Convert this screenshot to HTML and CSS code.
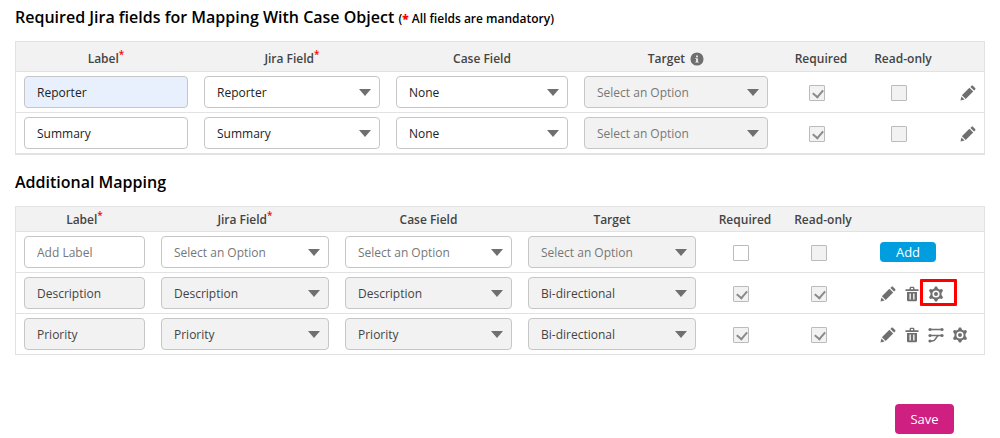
FILE: index.html
```html
<!DOCTYPE html>
<html lang="en">

<head>
  <meta charset="UTF-8">
  <meta name="viewport" content="width=device-width, initial-scale=1.0">
  <title>Jira Field Mapping</title>
  <link rel="stylesheet" href="styles.css">
</head>

<body>
  <!-- icons -->
  <svg class="sprite" aria-hidden="true">
    <symbol id="i-edit" viewBox="0 0 16 16">
      <path d="M.5 15.500l.9-4.100 3.200 3.200z" />
      <path d="M1.900 10.300l7.500-7.500 3.800 3.800-7.500 7.500z" />
      <path d="M10.400 1.900l1-1c.5-.5 1.200-.5 1.700 0l2 2c.5.5.5 1.200 0 1.700l-1 1z" />
    </symbol>
    <symbol id="i-trash" viewBox="0 0 16 16">
      <path d="M1.500 3.200h4.100V2q0-1.200 1.200-1.200h2.400q1.200 0 1.200 1.200v1.200h4.100v1.800h-13zM7 3.200h2V2.100H7z" fill-rule="evenodd" />
      <path d="M3 6h10v8q0 1.300-1.300 1.300H4.300Q3 15.300 3 14zM5.500 7.500v6h1.300v-6zm3.700 0v6h1.300v-6z" fill-rule="evenodd" />
    </symbol>
    <symbol id="i-gear" viewBox="0 0 16 16">
      <path d="M7 .5h2l.9 2 1.500.9 2.600-.4 1 1.800-1.500 2.100v2.200l1.500 2.100-1 1.800-2.600-.4-1.500.9-.9 2H7l-.9-2-1.500-.9-2.600.4-1-1.800 1.500-2.100V6.900L1 4.800 2 3l2.600.4 1.500-.9zM8 4.400a3.600 3.600 0 100 7.200 3.600 3.600 0 000-7.200zM8 6a2 2 0 110 4 2 2 0 010-4z" fill-rule="evenodd" />
    </symbol>
    <symbol id="i-map" viewBox="0 0 16 16">
      <path d="M2 2.500h12M2 8.500h12M2 14h2.500C8 14 8 8.500 11 8.500" fill="none" stroke="currentColor" stroke-width="1.600" />
      <circle cx="2" cy="2.500" r="1.600" />
      <circle cx="14" cy="2.500" r="1.600" />
      <circle cx="2" cy="8.500" r="1.600" />
      <circle cx="14" cy="8.500" r="1.600" />
      <circle cx="2" cy="14" r="1.600" />
    </symbol>
    <symbol id="i-info" viewBox="0 0 16 16">
      <path d="M8 .5a7.500 7.500 0 100 15 7.500 7.500 0 000-15zM7 4h2v2H7zM6 7h3v4h1v1H6v-1h1V8H6z" fill-rule="evenodd" />
    </symbol>
  </svg>

  <main>
    <h2>Required Jira fields for Mapping With Case Object <small>(<b class="star">*</b> All fields are mandatory)</small></h2>
    <table class="mapping required">
      <colgroup>
        <col class="c-label">
        <col class="c-jira">
        <col class="c-case">
        <col class="c-target">
        <col class="c-req">
        <col class="c-read">
        <col class="c-action">
      </colgroup>
      <thead>
        <tr>
          <th>Label<sup>*</sup></th>
          <th>Jira Field<sup>*</sup></th>
          <th>Case Field</th>
          <th>Target <svg class="info"><use href="#i-info" /></svg></th>
          <th class="check">Required</th>
          <th class="check">Read-only</th>
          <th></th>
        </tr>
      </thead>
      <tbody>
        <tr>
          <td><input type="text" class="field filled" value="Reporter" aria-label="Label"></td>
          <td><div class="select"><select class="field" aria-label="Jira Field"><option>Reporter</option></select></div></td>
          <td><div class="select"><select class="field" aria-label="Case Field"><option>None</option></select></div></td>
          <td><div class="select"><select class="field empty" aria-label="Target" disabled><option>Select an Option</option></select></div></td>
          <td><input type="checkbox" aria-label="Required" checked disabled></td>
          <td><input type="checkbox" aria-label="Read-only" disabled></td>
          <td>
            <div class="actions">
              <button type="button" class="icon" aria-label="Edit"><svg><use href="#i-edit" /></svg></button>
            </div>
          </td>
        </tr>
        <tr>
          <td><input type="text" class="field" value="Summary" aria-label="Label"></td>
          <td><div class="select"><select class="field" aria-label="Jira Field"><option>Summary</option></select></div></td>
          <td><div class="select"><select class="field" aria-label="Case Field"><option>None</option></select></div></td>
          <td><div class="select"><select class="field empty" aria-label="Target" disabled><option>Select an Option</option></select></div></td>
          <td><input type="checkbox" aria-label="Required" checked disabled></td>
          <td><input type="checkbox" aria-label="Read-only" disabled></td>
          <td>
            <div class="actions">
              <button type="button" class="icon" aria-label="Edit"><svg><use href="#i-edit" /></svg></button>
            </div>
          </td>
        </tr>
      </tbody>
    </table>

    <h2>Additional Mapping</h2>
    <table class="mapping additional">
      <colgroup>
        <col class="c-label">
        <col class="c-jira">
        <col class="c-case">
        <col class="c-target">
        <col class="c-req">
        <col class="c-read">
        <col class="c-action">
      </colgroup>
      <thead>
        <tr>
          <th>Label<sup>*</sup></th>
          <th>Jira Field<sup>*</sup></th>
          <th>Case Field</th>
          <th>Target</th>
          <th class="check">Required</th>
          <th class="check">Read-only</th>
          <th></th>
        </tr>
      </thead>
      <tbody>
        <tr>
          <td><input type="text" class="field" placeholder="Add Label" aria-label="Label"></td>
          <td><div class="select"><select class="field empty" aria-label="Jira Field"><option>Select an Option</option></select></div></td>
          <td><div class="select"><select class="field empty" aria-label="Case Field"><option>Select an Option</option></select></div></td>
          <td><div class="select"><select class="field empty" aria-label="Target" disabled><option>Select an Option</option></select></div></td>
          <td><input type="checkbox" aria-label="Required"></td>
          <td><input type="checkbox" aria-label="Read-only" disabled></td>
          <td>
            <div class="actions">
              <button type="button" class="btn add">Add</button>
            </div>
          </td>
        </tr>
        <tr>
          <td><input type="text" class="field" value="Description" aria-label="Label" disabled></td>
          <td><div class="select"><select class="field" aria-label="Jira Field" disabled><option>Description</option></select></div></td>
          <td><div class="select"><select class="field" aria-label="Case Field" disabled><option>Description</option></select></div></td>
          <td><div class="select"><select class="field" aria-label="Target" disabled><option>Bi-directional</option></select></div></td>
          <td><input type="checkbox" aria-label="Required" checked disabled></td>
          <td><input type="checkbox" aria-label="Read-only" checked disabled></td>
          <td>
            <div class="actions">
              <button type="button" class="icon" aria-label="Edit"><svg><use href="#i-edit" /></svg></button>
              <button type="button" class="icon" aria-label="Delete"><svg><use href="#i-trash" /></svg></button>
              <button type="button" class="icon marked" aria-label="Settings"><svg><use href="#i-gear" /></svg></button>
            </div>
          </td>
        </tr>
        <tr>
          <td><input type="text" class="field" value="Priority" aria-label="Label" disabled></td>
          <td><div class="select"><select class="field" aria-label="Jira Field" disabled><option>Priority</option></select></div></td>
          <td><div class="select"><select class="field" aria-label="Case Field" disabled><option>Priority</option></select></div></td>
          <td><div class="select"><select class="field" aria-label="Target" disabled><option>Bi-directional</option></select></div></td>
          <td><input type="checkbox" aria-label="Required" checked disabled></td>
          <td><input type="checkbox" aria-label="Read-only" checked disabled></td>
          <td>
            <div class="actions">
              <button type="button" class="icon" aria-label="Edit"><svg><use href="#i-edit" /></svg></button>
              <button type="button" class="icon" aria-label="Delete"><svg><use href="#i-trash" /></svg></button>
              <button type="button" class="icon" aria-label="Map values"><svg><use href="#i-map" /></svg></button>
              <button type="button" class="icon" aria-label="Settings"><svg><use href="#i-gear" /></svg></button>
            </div>
          </td>
        </tr>
      </tbody>
    </table>

    <div class="footer">
      <button type="submit" class="btn save">Save</button>
    </div>
  </main>
</body>

</html>
```

FILE: styles.css
```css
:root {
  --color-line: #e2e2e2;
  --color-field-border: #c6c6c6;
  --color-disabled: #f2f2f2;
  --color-icon: #6f6f6f;
  --color-add: #009ddf;
  --color-save: #cf2082;
}

* {
  box-sizing: border-box;
}

body {
  margin: 0;
  padding: 6px 15px 4px;
  font-family: "Open Sans", "Noto Sans", sans-serif;
  font-size: 12px;
  line-height: 18px;
  color: #444;
  background: #fff;
}

.sprite {
  display: none;
}

h2 {
  margin: 0 0 13px;
  font-size: 16px;
  line-height: 22px;
  font-weight: 600;
  color: #000;
}

h2 small {
  font-size: 12px;
  line-height: 1;
}

.star,
sup {
  color: #f00;
}

sup {
  font-size: 10px;
  line-height: 0;
  vertical-align: 5px;
}

.mapping {
  width: 100%;
  table-layout: fixed;
  border-collapse: separate;
  border-spacing: 0;
  border: 1px solid var(--color-line);
}

.mapping th {
  height: 25px;
  padding: 2px 8px 0;
  font-weight: 600;
  background: var(--color-disabled);
  border-bottom: 1px solid var(--color-line);

  &.check {
    padding-right: 0;
  }
}

.mapping td {
  height: 41px;
  padding: 4px 8px;
  border-bottom: 1px solid var(--color-line);
}

/* column widths, the table stretches them in proportion */
.required {
  margin-bottom: 16px;

  & th { height: 30px; padding-top: 5px; }
  & .c-label { width: 180px; }
  & .c-jira { width: 192px; }
  & .c-case { width: 188px; }
  & .c-target { width: 200px; }
  & .c-req { width: 82px; }
  & .c-read { width: 82px; }
  & .c-action { width: 44px; }
}

.additional {
  & tbody tr:last-child td { border-bottom: 0; height: 40px; }
  & .c-label { width: 137px; }
  & .c-jira { width: 184px; }
  & .c-case { width: 183px; }
  & .c-target { width: 184px; }
  & .c-req { width: 74px; }
  & .c-read { width: 82px; }
  & .c-action { width: 124px; }
}

.field {
  display: block;
  appearance: none;
  width: 100%;
  height: 32px;
  margin: 0;
  padding: 0 12px;
  font: inherit;
  color: #222;
  background: #fff;
  border: 1px solid var(--color-field-border);
  border-radius: 4px;

  &.filled {
    background: #e8f0fe;
  }

  &:disabled {
    color: #444;
    background: var(--color-disabled);
    opacity: 1;
  }

  &.empty,
  &::placeholder {
    color: #777;
  }
}

.select {
  position: relative;

  & .field {
    padding-top: 2px;
  }

  &::after {
    content: "";
    position: absolute;
    top: 13px;
    right: 9px;
    border: 6px solid transparent;
    border-top: 7px solid var(--color-icon);
    border-bottom: 0;
    pointer-events: none;
  }
}

input[type="checkbox"] {
  appearance: none;
  display: block;
  width: 16px;
  height: 16px;
  margin: 2px auto 0;
  background: #fff;
  border: 1px solid #bbb;
  border-radius: 1px;

  &:disabled {
    background: var(--color-disabled);
  }

  &:checked::after {
    content: "";
    display: block;
    width: 8px;
    height: 5px;
    margin: 3px 0 0 3px;
    border: solid #8a8a8a;
    border-width: 0 0 2px 2px;
    transform: rotate(-50deg);
  }
}

.info {
  width: 14px;
  height: 14px;
  margin-left: 2px;
  vertical-align: -3px;
  fill: var(--color-icon);
}

.actions {
  display: flex;
  align-items: center;
  gap: 8px;
  padding-left: 12px;
}

button {
  padding: 0;
  font: inherit;
  border: 0;
  cursor: pointer;
}

.icon {
  position: relative;
  flex: none;
  width: 16px;
  height: 16px;
  margin-top: 2px;
  color: var(--color-icon);
  background: none;

  & svg {
    display: block;
    width: 16px;
    height: 16px;
    fill: currentColor;
  }

  &.marked::after {
    content: "";
    position: absolute;
    inset: -7px -13px -4px -8px;
    border: 3px solid #f00;
    border-radius: 1px;
  }
}

.btn {
  font-size: 13px;
  color: #fff;
  border-radius: 4px;

  &.add {
    width: 56px;
    height: 20px;
    background: var(--color-add);
  }

  &.save {
    width: 59px;
    height: 30px;
    background: var(--color-save);
  }
}

.footer {
  display: flex;
  justify-content: flex-end;
  margin-top: 49px;
  padding-right: 31px;
}
```
